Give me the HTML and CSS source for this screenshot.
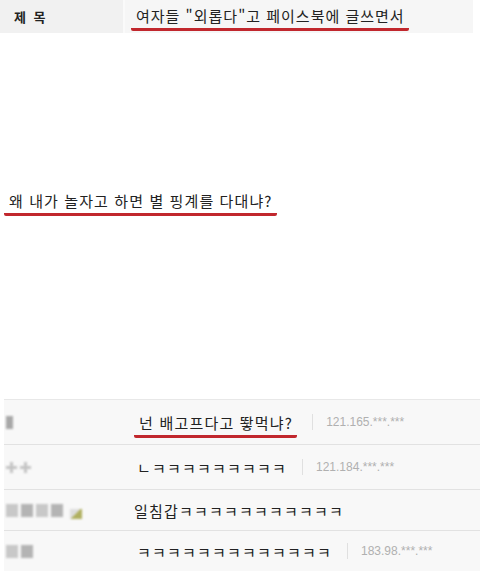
FILE: index.html
```html
<!DOCTYPE html>
<html lang="ko">
<head>
  <meta charset="UTF-8" />
  <meta name="viewport" content="width=device-width, initial-scale=1.0"/>
  <title>여자들 "외롭다"고 페이스북에 글쓰면서</title>
  <link rel="stylesheet" href="styles.css">
</head>
<body>
  <div class="subject">
    <div class="subject-label">제 목</div>
    <div class="subject-text"><span class="mark">여자들 "외롭다"고 페이스북에 글쓰면서</span></div>
  </div>

  <div class="post">
    <p><span class="mark">왜 내가 놀자고 하면 별 핑계를 다대냐?</span></p>
  </div>

  <ul class="comments">
    <li class="comment tall">
      <div class="nick"><i class="blur b1"></i></div>
      <div class="msg"><span class="mark">넌 배고프다고 뙇먹냐?</span></div>
      <div class="ip">121.165.***.***</div>
    </li>
    <li class="comment tall">
      <div class="nick"><i class="blur plus"></i><i class="blur plus"></i></div>
      <div class="msg jamo">ㄴㅋㅋㅋㅋㅋㅋㅋㅋㅋ</div>
      <div class="ip">121.184.***.***</div>
    </li>
    <li class="comment">
      <div class="nick"><i class="blur"></i><i class="blur dark"></i><i class="blur"></i><i class="blur dark"></i><i class="blur icon"></i></div>
      <div class="msg">일침갑ㅋㅋㅋㅋㅋㅋㅋㅋㅋㅋㅋ</div>
    </li>
    <li class="comment">
      <div class="nick"><i class="blur"></i><i class="blur dark"></i></div>
      <div class="msg jamo">ㅋㅋㅋㅋㅋㅋㅋㅋㅋㅋㅋㅋㅋ</div>
      <div class="ip">183.98.***.***</div>
    </li>
  </ul>
</body>
</html>
```

FILE: styles.css
```css
body {
  margin: 0;
  background: #fff;
  font-family: "Noto Sans CJK KR", "Noto Sans", sans-serif;
  color: #222;
}

.subject {
  display: flex;
  height: 33px;
  align-items: stretch;
  width: 473px;
}

.subject-label {
  width: 125px;
  background: #f1f1f1;
  font-size: 13px;
  font-weight: bold;
  padding-left: 14px;
  box-sizing: border-box;
  line-height: 33px;
  word-spacing: 4px;
  border-right: 2px solid #fafafa;
}

.subject-text {
  flex: 1;
  background: #f6f6f6;
  font-size: 15px;
  letter-spacing: 1px;
  line-height: 31px;
  padding-left: 6px;
}

.mark {
  padding: 0 4px 2px 5px;
  border-bottom: 3px solid #c1272d;
  border-radius: 2px;
}

.post {
  height: 366px;
  padding: 0 0 0 4px;
}

.post p {
  margin: 0;
  padding-top: 157px;
  font-size: 15px;
  letter-spacing: 1.1px;
}

.comments {
  list-style: none;
  margin: 0 0 0 4px;
  padding: 0;
  border-top: 1px solid #e8e8e8;
  background: #f8f8f8;
}

.comment {
  display: flex;
  align-items: center;
  height: 40px;
  border-bottom: 1px solid #e2e2e2;
  font-size: 15px;
  letter-spacing: 1.2px;
}

.comment.tall {
  height: 44px;
}

.nick {
  width: 130px;
  display: flex;
  gap: 3px;
  padding-left: 2px;
  box-sizing: border-box;
  align-items: center;
}

.blur {
  width: 12px;
  height: 13px;
  background: #c8c8c8;
  filter: blur(0.8px);
}

.blur.dark {
  background: #b4b4b4;
}

.blur.b1 {
  width: 7px;
  background: #a8a8a8;
}

.blur.plus {
  width: 11px;
  height: 11px;
  background: linear-gradient(#fff0 35%, #c4c4c4 35%, #c4c4c4 65%, #fff0 65%),
              linear-gradient(90deg, #fff0 35%, #c4c4c4 35%, #c4c4c4 65%, #fff0 65%);
}

.blur.icon {
  width: 12px;
  height: 10px;
  margin: 8px 0 0 4px;
  background: linear-gradient(135deg, #ddd 50%, #b0b060 50%);
}

.msg {
  padding-right: 15px;
}

.msg.jamo {
  padding-left: 3px;
}

.ip {
  border-left: 1px solid #e0e0e0;
  padding-left: 13px;
  font-family: "Liberation Sans", Arial, sans-serif;
  font-size: 12px;
  letter-spacing: 0;
  color: #b0b0b0;
  line-height: 16px;
}
```
